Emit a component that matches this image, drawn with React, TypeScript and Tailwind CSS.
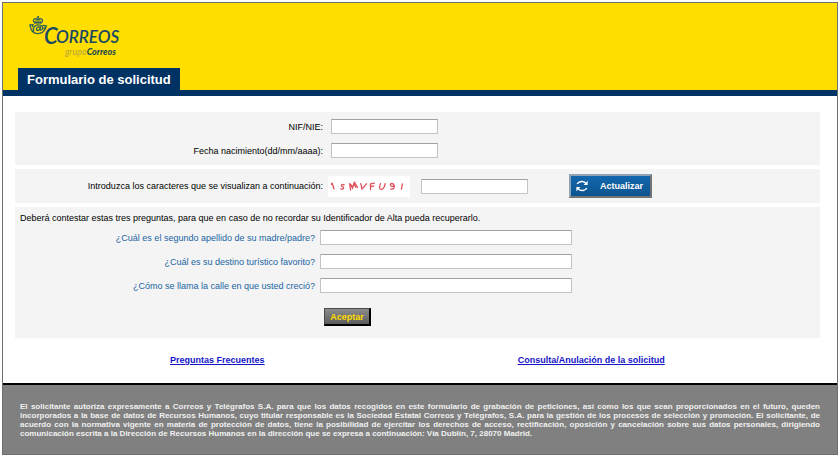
import React from "react";

const questions = [
  { id: "apellido", text: "¿Cuál es el segundo apellido de su madre/padre?" },
  { id: "destino", text: "¿Cuál es su destino turístico favorito?" },
  { id: "calle", text: "¿Cómo se llama la calle en que usted creció?" },
];

const inputStyle =
  "h-[15px] border border-[#c4c4c4] border-t-[#a2a2a2] bg-white px-1 text-[9px] outline-none";

const Logo: React.FC = () => (
  <svg width="96" height="44" viewBox="0 0 96 44" role="img" aria-label="Correos grupo Correos">
    {/* crown */}
    <g fill="none" stroke="#2f5f58" strokeWidth="1.2">
      <path d="M9 1v2.6M7.8 2h2.4" />
      <path d="M5.2 7.4C3 4.4 5.8 2.8 9 4.2C12.2 2.8 15 4.4 12.8 7.4" />
      <path d="M9 4v3.2M7 7C6.4 5.6 7 4.8 9 4.2C11 4.8 11.6 5.6 11 7" strokeWidth="1" />
      <path d="M5 7.7h8" strokeWidth="1.8" />
    </g>
    {/* post horn */}
    <g fill="none" stroke="#2f5f58" strokeWidth="1.3" strokeLinecap="round" strokeLinejoin="round">
      <path d="M0.8 10L4.2 9.6L3.6 11.6" />
      <path d="M1.2 10.4C1.6 15.6 4.2 18.6 9 18.6C12.6 18.6 15 16.8 16.4 13.6" />
      <path d="M4.6 16.4C3.6 12.4 5.8 9.8 9.2 9.8C13 9.8 14.6 12.6 13.2 14.4C12.2 15.8 10.8 15.2 11 13.8L11.4 11.8" />
      <path d="M11.2 12.4C9.6 11.2 7.4 12.4 7.4 14.2C7.4 16 10 16 11 13.8" />
      <path d="M14 10.4L17.4 11L16.4 13.6L14.4 12.8" />
    </g>
    <g fill="#174866" fontFamily="Lato, sans-serif" fontStyle="italic" fontWeight="600">
      <text x="15" y="29" fontSize="22">C</text>
      <text x="27" y="28" fontSize="17">ORREOS</text>
    </g>
    <text x="36" y="40" fontSize="9" fontFamily="Lato, sans-serif" fontStyle="italic">
      <tspan fill="#b5a53c">grupo</tspan>
      <tspan fill="#1f4a4a" fontWeight="900">Correos</tspan>
    </text>
  </svg>
);

const Captcha: React.FC = () => (
  <svg width="82" height="21" viewBox="0 0 82 21" role="img" aria-label="1sMVFU9I" className="bg-white">
    <g fill="none" stroke="#e0525c" strokeWidth="1.3" strokeLinecap="round" strokeLinejoin="round">
      <path d="M3.4 8.4L4.2 7.2L6 13" />
      <path d="M16.2 8.8C14 7.8 12.4 9.4 14.2 10.4C16.8 11.4 15.4 13.8 12.8 12.8" />
      <path d="M22.6 14L21.6 7.6L25 10.8L26.4 6L29.4 11.6M23 9.2L24.6 12.4M26.4 7.6L27.6 11" />
      <path d="M32.8 7.6L34 13.2L38.4 7.8" />
      <path d="M46.4 7.2L42.4 7.8L42.6 13.6M42.6 10.6L45.6 10" />
      <path d="M52.4 7.6C51 11.6 51.2 13.4 53.2 13.4C55.6 13.4 56.4 11 57.2 7.6" />
      <path d="M66 9.4C65.4 6.8 62 7 62.4 9.2C62.8 10.8 65.6 10.8 66 8.8C66.8 11.6 65.8 13.6 62.8 13" />
      <path d="M74.4 8L73.4 13.2" />
    </g>
  </svg>
);

const RefreshIcon: React.FC = () => (
  <svg width="12" height="12" viewBox="0 0 12 12" aria-hidden="true">
    <g fill="none" stroke="#ffffff" strokeWidth="1.5">
      <path d="M1.2 4C2.8 1 7.4 0.6 9.6 3" />
      <path d="M10.8 8C9.2 11 4.6 11.4 2.4 9" />
    </g>
    <path d="M11.6 0.8V5H7.6z" fill="#ffffff" />
    <path d="M0.4 11.2V7H4.4z" fill="#ffffff" />
  </svg>
);

const App: React.FC = () => {
  return (
    <div className="bg-white px-0.5 pt-0.5 pb-1 font-['Liberation_Sans',Arial,sans-serif] text-[9px] leading-3 text-black">
      <div className="border border-[#6f6f6f]">
        <header className="border-b-[6px] border-[#003263] bg-[#ffde00] px-[15px] pt-3">
          <div className="h-[53px] pl-[11px]">
            <Logo />
          </div>
          <h1 className="inline-block bg-[#003263] px-[9px] pt-0.5 align-top text-[13px] font-bold leading-5 text-white">
            Formulario de solicitud
          </h1>
        </header>

        <main>
          <form className="mr-[17px] ml-3 flex flex-col gap-1 pt-4" onSubmit={(e) => e.preventDefault()}>
            <section className="flex flex-col gap-[9px] bg-[#f4f4f4] pt-[7px] pb-[7px]">
              <div className="flex items-center gap-2">
                <label htmlFor="nif" className="w-[308px] text-right">NIF/NIE:</label>
                <input id="nif" type="text" className={`${inputStyle} w-[107px]`} />
              </div>
              <div className="flex items-center gap-2">
                <label htmlFor="fecha" className="w-[308px] text-right">Fecha nacimiento(dd/mm/aaaa):</label>
                <input id="fecha" type="text" className={`${inputStyle} w-[107px]`} />
              </div>
            </section>

            <section className="flex items-center bg-[#f4f4f4] py-[5px]">
              <label htmlFor="captcha" className="mr-[5px] w-[308px] text-right">
                Introduzca los caracteres que se visualizan a continuación:
              </label>
              <Captcha />
              <input id="captcha" type="text" className={`${inputStyle} ml-[11px] w-[107px]`} />
              <button
                type="button"
                className="ml-[41px] flex h-6 w-[83px] items-center border-2 border-t-[#8fa3b5] border-r-[#737373] border-b-[#737373] border-l-[#8fa3b5] bg-linear-to-b from-[#1267ae] to-[#0d548f] pl-[5px] font-bold text-white"
              >
                <RefreshIcon />
                <span className="ml-3">Actualizar</span>
              </button>
            </section>

            <section className="bg-[#f4f4f4] pt-[5px] pb-3">
              <p className="pl-[5px]">
                Deberá contestar estas tres preguntas, para que en caso de no recordar su Identificador de Alta pueda recuperarlo.
              </p>
              <div className="mt-[6px] flex flex-col gap-[9px]">
                {questions.map((q) => (
                  <div key={q.id} className="flex items-center gap-[5px]">
                    <label htmlFor={q.id} className="w-[300px] text-right text-[#1a64a3]">{q.text}</label>
                    <input id={q.id} type="text" className={`${inputStyle} w-[252px]`} />
                  </div>
                ))}
              </div>
              <button
                type="submit"
                className="mt-[15px] ml-[309px] block h-[18px] w-[47px] border border-r-2 border-b-2 border-t-[#4a4a4a] border-r-black border-b-black border-l-[#4a4a4a] bg-linear-to-b from-[#8c8c8c] to-[#5c5c5c] font-bold text-[#ffde00]"
              >
                Aceptar
              </button>
            </section>
          </form>

          <nav className="flex pt-4 pb-[17px] font-bold text-[#1414c8]">
            <div className="w-[51.4%] text-center">
              <a href="#preguntas" className="underline">Preguntas Frecuentes</a>
            </div>
            <div className="flex-1 pl-[86px]">
              <a href="#consulta" className="underline">Consulta/Anulación de la solicitud</a>
            </div>
          </nav>
        </main>

        <footer className="border-t-2 border-black bg-[#808080] px-[17px] pt-[17px] pb-4 text-justify text-[8px] font-bold leading-[9px] text-[#f0f0f0]">
          El solicitante autoriza expresamente a Correos y Telégrafos S.A. para que los datos recogidos en este formulario de grabación de peticiones, así como los que sean proporcionados en el futuro, queden incorporados a la base de datos de Recursos Humanos, cuyo titular responsable es la Sociedad Estatal Correos y Telégrafos, S.A. para la gestión de los procesos de selección y promoción. El solicitante, de acuerdo con la normativa vigente en materia de protección de datos, tiene la posibilidad de ejercitar los derechos de acceso, rectificación, oposición y cancelación sobre sus datos personales, dirigiendo comunicación escrita a la Dirección de Recursos Humanos en la dirección que se expresa a continuación: Vía Dublín, 7, 28070 Madrid.
        </footer>
      </div>
    </div>
  );
};

export default App;
